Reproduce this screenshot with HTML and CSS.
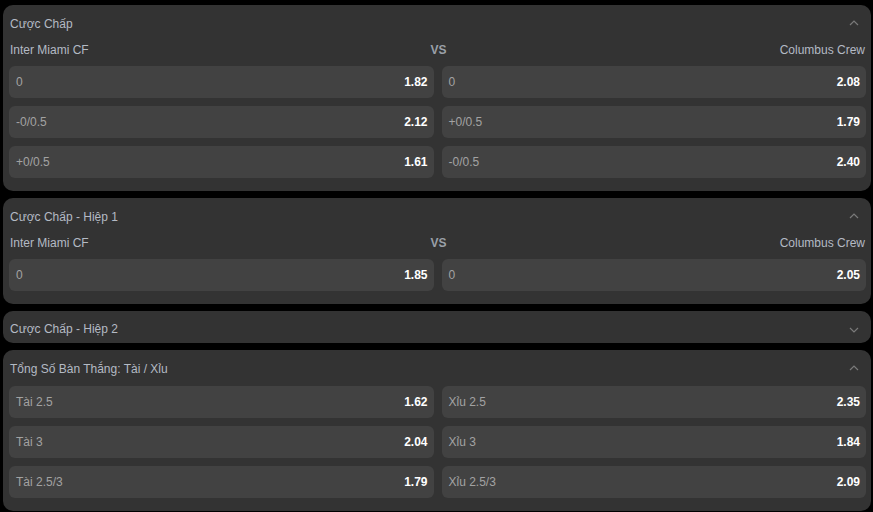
FILE: index.html
```html
<html>
  <head>
    <title>Kèo</title>
    <link rel="stylesheet" href="styles.css">
  </head>
<body>

  <section class="market">
    <div class="market-head">
      <span>Cược Chấp</span>
      <svg class="chev" width="10" height="6" viewBox="0 0 10 6"><polyline points="1,5 5,1 9,5" /></svg>
    </div>
    <div class="teams">
      <span>Inter Miami CF</span>
      <b class="vs">VS</b>
      <span class="away">Columbus Crew</span>
    </div>
    <div class="grid">
      <div class="odd"><span>0</span><b>1.82</b></div>
      <div class="odd"><span>0</span><b>2.08</b></div>
      <div class="odd"><span>-0/0.5</span><b>2.12</b></div>
      <div class="odd"><span>+0/0.5</span><b>1.79</b></div>
      <div class="odd"><span>+0/0.5</span><b>1.61</b></div>
      <div class="odd"><span>-0/0.5</span><b>2.40</b></div>
    </div>
  </section>

  <section class="market">
    <div class="market-head">
      <span>Cược Chấp - Hiệp 1</span>
      <svg class="chev" width="10" height="6" viewBox="0 0 10 6"><polyline points="1,5 5,1 9,5" /></svg>
    </div>
    <div class="teams">
      <span>Inter Miami CF</span>
      <b class="vs">VS</b>
      <span class="away">Columbus Crew</span>
    </div>
    <div class="grid">
      <div class="odd"><span>0</span><b>1.85</b></div>
      <div class="odd"><span>0</span><b>2.05</b></div>
    </div>
  </section>

  <section class="market closed">
    <div class="market-head">
      <span>Cược Chấp - Hiệp 2</span>
      <svg class="chev" width="10" height="6" viewBox="0 0 10 6"><polyline points="1,1 5,5 9,1" /></svg>
    </div>
  </section>

  <section class="market">
    <div class="market-head">
      <span>Tổng Số Bàn Thắng: Tài / Xỉu</span>
      <svg class="chev" width="10" height="6" viewBox="0 0 10 6"><polyline points="1,5 5,1 9,5" /></svg>
    </div>
    <div class="grid">
      <div class="odd"><span>Tài 2.5</span><b>1.62</b></div>
      <div class="odd"><span>Xỉu 2.5</span><b>2.35</b></div>
      <div class="odd"><span>Tài 3</span><b>2.04</b></div>
      <div class="odd"><span>Xỉu 3</span><b>1.84</b></div>
      <div class="odd"><span>Tài 2.5/3</span><b>1.79</b></div>
      <div class="odd"><span>Xỉu 2.5/3</span><b>2.09</b></div>
    </div>
  </section>

</body>
</html>
```

FILE: styles.css
```css
body {
  margin: 0;
  padding: 5px 2px 0 3px;
  background: #000;
  font: 12px "Liberation Sans", Arial, sans-serif;
  color: #b4bac4;
  display: flex;
  flex-direction: column;
  gap: 7px;
}

.market {
  background: #333;
  border-radius: 10px;
  padding: 0 5px 13px 6px;
}
.market.closed { padding-bottom: 0; }

.market-head {
  height: 35px;
  padding: 1px 7px 0 1px;
  display: flex;
  align-items: center;
  justify-content: space-between;
}
.closed .market-head { height: 32px; padding-top: 3px; align-items: flex-start; line-height: 30px; box-sizing: border-box; }
.closed .market-head .chev { margin-top: 13px; }

.chev polyline { fill: none; stroke: #7a7a7a; stroke-width: 1.2; }
.market-head .chev { margin-top: -1px; }

.teams {
  height: 17px;
  margin-bottom: 8px;
  display: grid;
  grid-template-columns: 1fr auto 1fr;
  align-items: center;
  padding: 0 1px;
}
.teams .vs { color: #9aa0a8; font-weight: bold; margin-left: 2px; }
.teams .away { text-align: right; }

.grid {
  display: grid;
  grid-template-columns: 1fr 1fr;
  gap: 8px;
}

.odd {
  height: 32px;
  background: #424242;
  border-radius: 6px;
  display: flex;
  align-items: center;
  justify-content: space-between;
  padding: 0 6px 0 7px;
  color: #a2a2a2;
}
.odd b { color: #fff; font-weight: bold; }
```
